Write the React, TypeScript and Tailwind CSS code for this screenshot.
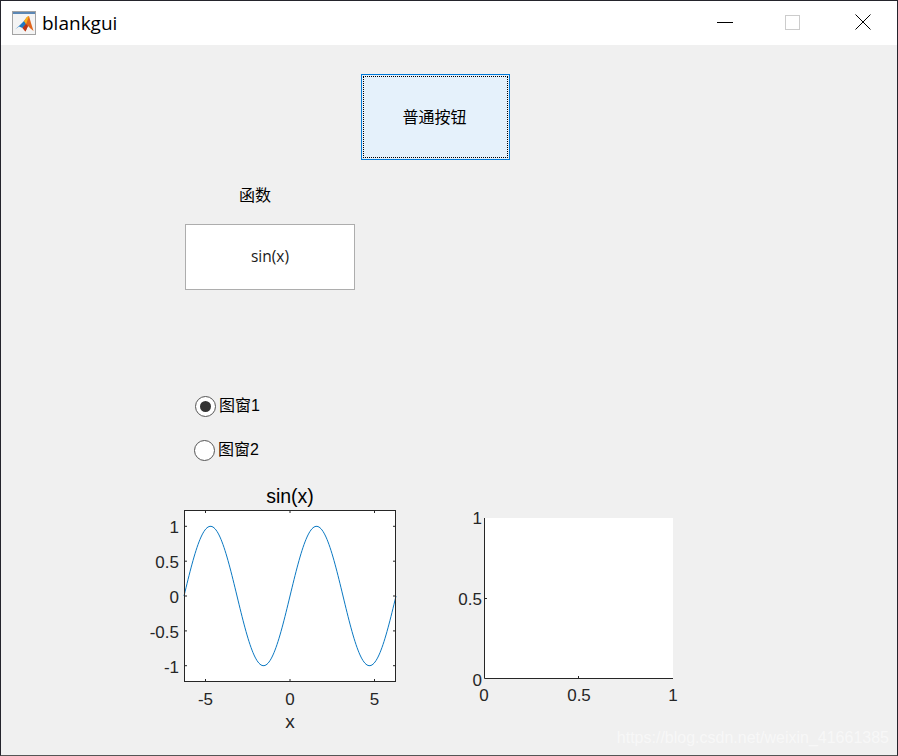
const cjk = "font-['Liberation_Sans','Noto_Sans_CJK_SC',sans-serif]";

function sinPath() {
  const pts: string[] = [];
  for (let i = 0; i <= 212; i++) {
    const x = -6.2832 + (i / 212) * 12.5664;
    pts.push(`${(44 + i).toFixed(1)},${(111 - Math.sin(x) * 69.7).toFixed(2)}`);
  }
  return pts.join(" ");
}

// matlab window icon
function MatlabIcon() {
  return (
    <svg width="24" height="24" viewBox="0 0 24 24" className="block">
      <rect x="0.5" y="0.5" width="23" height="23" fill="#f4f4f4" stroke="#a3a3a3" />
      <rect x="1" y="1" width="22" height="2" fill="#5b87b5" />
      <path d="M12 10 L15 6 L17 5 L19 12 L21.5 20 L18.5 17.5 L16 15 L13.5 20.5 L10.5 17 Z" fill="#e0651c" />
      <path d="M3 18.5 L8 14 L12 10 L14 13 L10.5 17 L7 15.5 Z" fill="#1f78c4" />
      <path d="M12 10 L15 6 L17 5 L14.5 12 L14 13 Z" fill="#f5b21e" />
      <path d="M10.5 17 L14 13 L16 15 L13.5 20.5 Z" fill="#b8341a" />
    </svg>
  );
}

function TitleBar() {
  return (
    <div className="flex h-[44px] items-center bg-white">
      <div className="ml-[11px] mr-[6px] mt-[-1px]">
        <MatlabIcon />
      </div>
      <span className="font-['Open_Sans',sans-serif] text-[19px] text-black">blankgui</span>
      <div className="ml-auto mt-[-2px] flex items-center">
        <div className="flex w-[63px] justify-center">
          <div className="h-px w-[16px] bg-black" />
        </div>
        <div className="flex w-[73px] justify-center">
          <div className="h-[15px] w-[15px] border border-[#cccccc]" />
        </div>
        <div className="flex w-[68px] justify-center">
          <svg width="16" height="16" viewBox="0 0 16 16">
            <path d="M0.5 0.5 L15.5 15.5 M15.5 0.5 L0.5 15.5" stroke="#000" strokeWidth="1" fill="none" />
          </svg>
        </div>
      </div>
    </div>
  );
}

function SinPlot() {
  const xt = [65.5, 150, 234.5];
  const yt = [41.3, 76.2, 111, 145.9, 180.7];
  const yl = ["1", "0.5", "0", "-0.5", "-1"];
  return (
    <svg width="270" height="250" className="block font-['Liberation_Sans',sans-serif]">
      <rect x="44" y="25" width="212" height="171" fill="#fff" />
      <polyline points={sinPath()} fill="none" stroke="#0a78c2" strokeWidth="1" />
      <rect x="44.5" y="25.5" width="211" height="171" fill="none" stroke="#262626" />
      {xt.map((x) => (
        <path key={x} d={`M${x} 26 V28 M${x} 196 V194`} stroke="#262626" />
      ))}
      {yt.map((y) => (
        <path key={y} d={`M45 ${y} H47 M255 ${y} H253`} stroke="#262626" />
      ))}
      {yl.map((l, i) => (
        <text key={l} x="39" y={yt[i] + 7} textAnchor="end" fontSize="17" fill="#262626">
          {l}
        </text>
      ))}
      {["-5", "0", "5"].map((l, i) => (
        <text key={l} x={xt[i]} y="220" textAnchor="middle" fontSize="17" fill="#262626">
          {l}
        </text>
      ))}
      <text x="150" y="243" textAnchor="middle" fontSize="19" fill="#262626">
        x
      </text>
      <text x="150" y="18" textAnchor="middle" fontSize="19.5" fill="#000">
        sin(x)
      </text>
    </svg>
  );
}

function EmptyPlot() {
  return (
    <svg width="240" height="200" className="block font-['Liberation_Sans',sans-serif]">
      <rect x="34" y="13" width="189" height="161" fill="#fff" />
      <path d="M34.5 13 V173.5 H223" fill="none" stroke="#262626" />
      <path d="M35 93.5 H37 M128.5 173 V171" stroke="#262626" />
      <text x="32" y="19" textAnchor="end" fontSize="17" fill="#262626">1</text>
      <text x="32" y="100" textAnchor="end" fontSize="17" fill="#262626">0.5</text>
      <text x="32" y="181" textAnchor="end" fontSize="17" fill="#262626">0</text>
      <text x="34" y="196" textAnchor="middle" fontSize="17" fill="#262626">0</text>
      <text x="129" y="196" textAnchor="middle" fontSize="17" fill="#262626">0.5</text>
      <text x="223" y="196" textAnchor="middle" fontSize="17" fill="#262626">1</text>
    </svg>
  );
}

function Radio({ checked, label }: { checked?: boolean; label: string }) {
  return (
    <div className={`flex items-center gap-[3px] ${cjk} text-[16px] text-black`}>
      <div className="flex h-[21px] w-[21px] items-center justify-center rounded-full border-[1.5px] border-[#555555] bg-white">
        {checked && <div className="h-[11px] w-[11px] rounded-full bg-[#333333]" />}
      </div>
      <span>{label}</span>
    </div>
  );
}

export default function App() {
  return (
    <div className="relative h-[756px] w-[898px] overflow-hidden border border-t-[#24242c] border-r-[#24242c] border-b-[#555555] border-l-[#24242c] bg-[#f0f0f0]">
      <TitleBar />

      {/* push button */}
      <div className="ml-[360px] mt-[29px] w-[149px]">
        <button className={`flex h-[86px] w-[149px] items-center justify-center border-[1.5px] border-[#0078d7] bg-[#e5f1fb] pt-[2px] pr-[2px] outline-1 -outline-offset-3 outline-dotted outline-black ${cjk} text-[16px] text-black`}>
          普通按钮
        </button>
      </div>

      {/* function selector */}
      <div className={`ml-[238px] mt-[25px] ${cjk} h-[22px] text-[16px] leading-[22px] text-black`}>函数</div>
      <div className={`ml-[184px] mt-[17px] flex h-[66px] w-[170px] items-center justify-center border border-[#adadad] bg-white pb-[1px] font-['Open_Sans',sans-serif] text-[15.5px] text-[#1a1a1a]`}>
        sin(x)
      </div>

      {/* radio group */}
      <div className="ml-[194px] mt-[104px]">
        <Radio checked label="图窗1" />
      </div>
      <div className="ml-[193px] mt-[20px]">
        <Radio label="图窗2" />
      </div>

      {/* axes */}
      <div className="ml-[139px] mt-[23px] flex items-start gap-[40px]">
        <SinPlot />
        <div className="mt-[20px]">
          <EmptyPlot />
        </div>
      </div>

      <div className="absolute bottom-[5px] right-[8px] font-['Liberation_Sans',sans-serif] text-[16px] text-white/50">
        https://blog.csdn.net/weixin_41661385
      </div>
    </div>
  );
}
